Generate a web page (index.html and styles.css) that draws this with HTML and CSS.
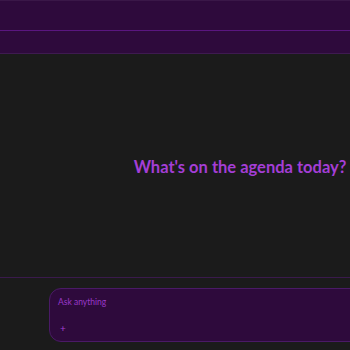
FILE: index.html
```html
<!DOCTYPE html>
<html>
<head>
<meta charset="utf-8">
<link rel="stylesheet" href="styles.css">
</head>
<body>
<div class="app">
  <header class="topbar"></header>
  <div class="subbar"></div>
  <main class="main">
    <div class="hero"><h1 class="title">What's on the agenda today?</h1></div>
  </main>
  <footer class="footer">
    <div class="composer">
      <div class="placeholder">Ask anything</div>
      <div class="plus">+</div>
    </div>
  </footer>
</div>
</body>
</html>
```
FILE: styles.css
```css
html, body { margin: 0; padding: 0; }
body {
  background: #1b1b1b;
  font-family: "Lato", "Noto Sans", sans-serif;
  width: 350px;
  height: 350px;
  overflow: hidden;
}
.app { display: flex; flex-direction: column; height: 350px; overflow: hidden; }
.topbar {
  height: 30px;
  background: #2e0a3c;
  border-top: 1px solid #3a1748;
  box-sizing: border-box;
}
.subbar {
  height: 24px;
  background: #2e0a3c;
  border-top: 1px solid #5a1680;
  border-bottom: 1px solid #3e1a50;
  box-sizing: border-box;
}
.main {
  height: 223px;
  display: flex;
  align-items: center;
  padding-left: 130px;
  box-sizing: border-box;
}
.hero { flex: 1; display: flex; justify-content: center; padding-top: 2px; }
.title {
  margin: 0;
  font-size: 16.5px;
  font-weight: 700;
  color: #a43ed6;
  white-space: nowrap;
}
.footer {
  flex: 1;
  border-top: 1px solid #3a1a4c;
  padding: 10px 0 0 49px;
  box-sizing: border-box;
  overflow: hidden;
}
.composer {
  height: 54px;
  width: 320px;
  background: #2e0a3c;
  border: 1px solid #4a1a66;
  border-radius: 12px;
  box-sizing: border-box;
  padding: 8px 0 8px 8px;
  display: flex;
  flex-direction: column;
  justify-content: space-between;
}
.placeholder { font-size: 8.5px; color: #9a38c8; }
.plus { font-size: 10px; color: #a040d0; line-height: 10px; padding-left: 2px; }
```
